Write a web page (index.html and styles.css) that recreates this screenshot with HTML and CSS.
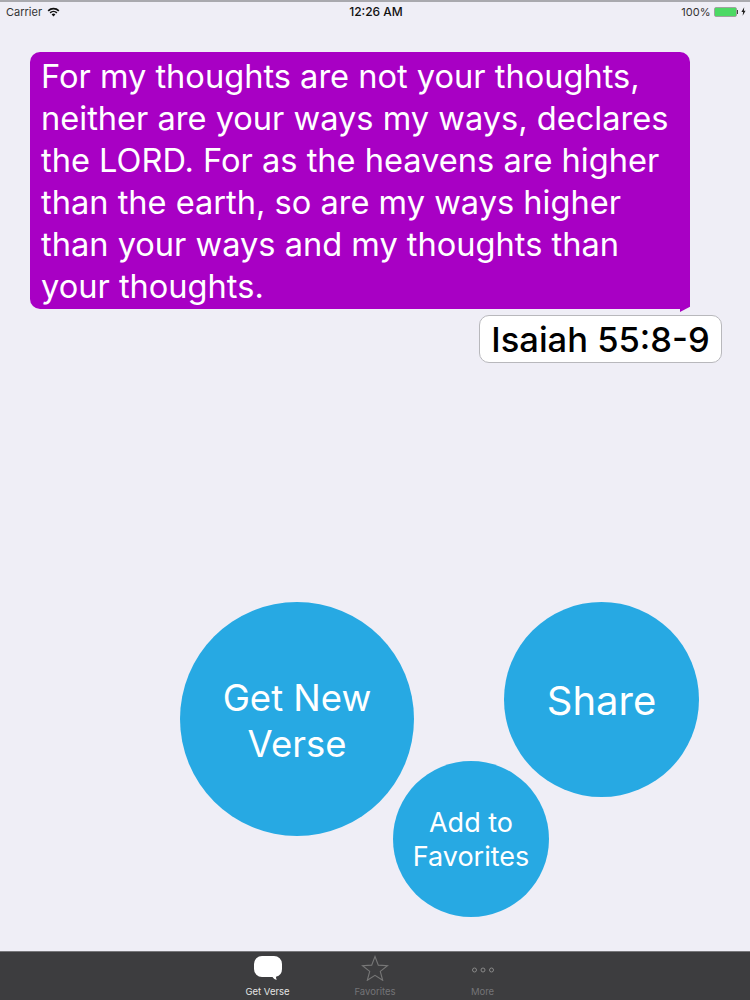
FILE: index.html
```html
<!DOCTYPE html>
<html lang="en">
<head>
<meta charset="utf-8">
<title>Get Verse</title>
<link rel="stylesheet" href="styles.css">
</head>
<body>
<div class="app">
  <header class="status">
    <div class="status-left"><span>Carrier</span>
      <svg class="wifi" viewBox="0 0 14 11" width="13" height="10"><path d="M7 10.500 4.900 8.200a3 3 0 0 1 4.200 0Z M3.900 7.100 2.700 5.800a6.200 6.200 0 0 1 8.600 0L10.100 7.100a4.500 4.500 0 0 0-6.200 0Z M1.800 4.900.5 3.500a9.300 9.300 0 0 1 13 0l-1.300 1.400a7.500 7.500 0 0 0-10.400 0Z"/></svg>
    </div>
    <div class="status-time">12:26 AM</div>
    <div class="status-right"><span>100%</span>
      <span class="battery"><span class="battery-fill"></span></span><span class="battery-tip"></span>
      <svg class="bolt" viewBox="0 0 6 10" width="5" height="9"><path d="M3.800 0 .5 5.600h2L2 10l3.500-5.800h-2Z"/></svg>
    </div>
  </header>
  <main class="stage">
    <div class="verse">For my thoughts are not your thoughts, neither are your ways my ways, declares the LORD. For as the heavens are higher than the earth, so are my ways higher than your ways and my thoughts than your thoughts.</div>
    <div class="reference">Isaiah 55:8-9</div>
    <button class="circle circle-new">Get New<br>Verse</button>
    <button class="circle circle-share">Share</button>
    <button class="circle circle-fav">Add to<br>Favorites</button>
  </main>
  <nav class="tabbar">
    <div class="tab tab-active">
      <svg class="tab-icon" viewBox="0 0 30 26" width="30" height="26"><path d="M9 1h12a8 8 0 0 1 8 8v5a8 8 0 0 1-6 7.700c-.2 1 .2 2 .8 3-1.800-.2-3.300-1-4.300-2.700H9a8 8 0 0 1-8-8V9a8 8 0 0 1 8-8Z" fill="#fff"/></svg>
      <span>Get Verse</span>
    </div>
    <div class="tab">
      <svg class="tab-icon" viewBox="0 0 28 26" width="28" height="26"><path d="M14 1.500l3.300 8.600 9.200.5-7.200 5.800 2.400 8.900L14 20.300l-7.700 5 2.400-8.900-7.200-5.800 9.200-.5Z" fill="none" stroke="#777" stroke-width="1.100"/></svg>
      <span>Favorites</span>
    </div>
    <div class="tab">
      <svg class="tab-icon" viewBox="0 0 28 26" width="28" height="26"><g fill="none" stroke="#888" stroke-width="1"><circle cx="5.500" cy="15" r="2"/><circle cx="14" cy="15" r="2"/><circle cx="22.500" cy="15" r="2"/></g></svg>
      <span>More</span>
    </div>
  </nav>
</div>
</body>
</html>
```
FILE: styles.css
```css
* { box-sizing: border-box; }
html, body { margin: 0; padding: 0; }
body { font-family: Inter, Roboto, "Liberation Sans", sans-serif; }
.app {
  width: 750px;
  height: 1000px;
  display: flex;
  flex-direction: column;
  background: #efeef6;
  overflow: hidden;
}
.status {
  height: 21px;
  flex: none;
  display: grid;
  grid-template-columns: 1fr auto 1fr;
  align-items: center;
  padding: 0 4px 0 6px;
  font-size: 11px;
  color: #333;
  border-top: 2px solid #a9a9ae;
}
.status-left { display: flex; align-items: center; gap: 5px; }
.wifi { fill: #111; }
.status-time { font-size: 12px; font-weight: 500; color: #111; }
.status-right { display: flex; align-items: center; justify-content: flex-end; }
.battery {
  margin-left: 3px;
  width: 23px;
  height: 10px;
  border: 1px solid #9fa39f;
  border-radius: 2px;
  display: block;
}
.battery-fill { display: block; height: 100%; background: #4cd964; }
.battery-tip { width: 1.500px; height: 4px; background: #444; margin-right: 3px; }
.bolt { fill: #222; }
.stage { position: relative; flex: 1; padding: 31px 0 0 30px; }
.verse {
  position: relative;
  width: 660px;
  height: 257px;
  padding: 3px 11px;
  background: #a800c4;
  color: #fff;
  border-radius: 10px;
  font-size: 32.600px;
  line-height: 42px;
}
.verse::after {
  content: "";
  position: absolute;
  right: 0;
  bottom: -3px;
  width: 10px;
  height: 13px;
  background: #a800c4;
  clip-path: polygon(100% 0, 100% 60%, 0 100%, 0 0);
}
.reference {
  width: 243px;
  height: 48px;
  margin: 6px 0 0 449px;
  background: #fff;
  border: 1px solid #b8b8bc;
  border-radius: 10px;
  color: #000;
  font-size: 34.500px;
  font-weight: 500;
  line-height: 48px;
  text-align: center;
}
.circle {
  position: absolute;
  border: 0;
  border-radius: 50%;
  background: #27a9e3;
  color: #fff;
  font-family: inherit;
}
.circle-new { left: 180px; top: 581px; width: 234px; height: 234px; padding: 3px 0 0; font-size: 36.500px; line-height: 46px; }
.circle-share { left: 504px; top: 581px; width: 195px; height: 195px; padding: 2px 0 0; font-size: 40px; }
.circle-fav { left: 393px; top: 740px; width: 156px; height: 156px; padding: 1px 0 0; font-size: 27px; line-height: 34px; }
.tabbar {
  height: 49px;
  flex: none;
  display: flex;
  justify-content: center;
  gap: 27.500px;
  background: #3d3d3f;
  border-top: 1px solid #77777a;
}
.tab {
  width: 80px;
  display: flex;
  flex-direction: column;
  align-items: center;
  font-size: 9.500px;
  color: #747477;
  padding-top: 3px;
}
.tab span { margin-top: 5px; }
.tab-icon { display: block; }
.tab-active { color: #e4e4e4; }
```
